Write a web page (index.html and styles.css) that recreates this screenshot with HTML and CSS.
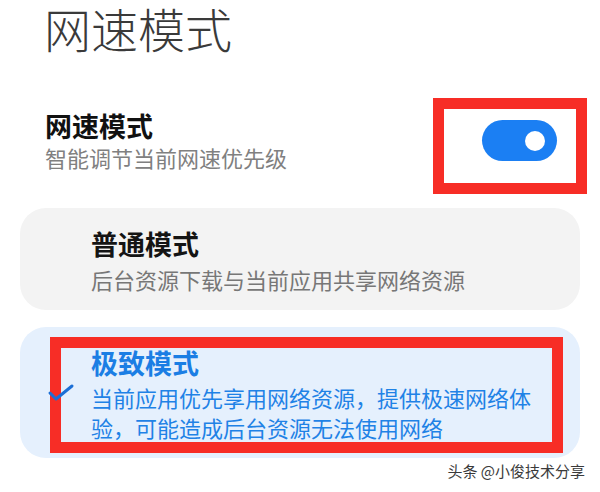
FILE: index.html
```html
<!DOCTYPE html>
<html lang="zh-CN">
<head>
<meta charset="utf-8">
<title>网速模式</title>
<link rel="stylesheet" href="styles.css">
</head>
<body>
<div class="page">
  <h1 class="page-title">网速模式</h1>

  <div class="setting-row">
    <div class="setting-text">
      <div class="setting-title">网速模式</div>
      <div class="setting-desc">智能调节当前网速优先级</div>
    </div>
    <div class="mark-box">
      <div class="toggle"><span class="knob"></span></div>
    </div>
  </div>

  <div class="mode-list">
    <div class="mode-card">
      <div class="mode-title">普通模式</div>
      <div class="mode-desc">后台资源下载与当前应用共享网络资源</div>
    </div>
    <div class="mode-card selected">
      <div class="mode-title">极致模式</div>
      <div class="mode-desc">当前应用优先享用网络资源，提供极速网络体验，可能造成后台资源无法使用网络</div>
      <div class="mark-overlay"></div>
      <svg class="check" viewBox="0 0 29 22" width="29" height="22">
        <path d="M4 10 L10 16 L26 3" fill="none" stroke="#1c6fd6" stroke-width="3" stroke-linecap="round" stroke-linejoin="round"/>
      </svg>
    </div>
  </div>

  <div class="watermark">头条 @小俊技术分享</div>
</div>
</body>
</html>
```

FILE: styles.css
```css
html, body {
  margin: 0;
  padding: 0;
  background: #ffffff;
}
body {
  font-family: "Noto Sans CJK SC", "Noto Sans", sans-serif;
  width: 600px;
  height: 492px;
  overflow: hidden;
}
.page {
  display: flex;
  flex-direction: column;
}
.page-title {
  margin: 0 0 0 44px;
  font-size: 47px;
  line-height: 56px;
  font-weight: 200;
  color: #3a3a3a;
}
.setting-row {
  display: flex;
  justify-content: space-between;
  align-items: flex-start;
  margin-top: 42px;
  padding-left: 45px;
  padding-right: 13px;
}
.setting-text {
  padding-top: 12px;
}
.setting-title {
  font-size: 27px;
  line-height: 32px;
  font-weight: 700;
  color: #111111;
}
.setting-desc {
  font-size: 22px;
  line-height: 30px;
  color: #808080;
}
.mark-box {
  box-sizing: border-box;
  width: 154px;
  height: 96px;
  border: 11px solid #f72d26;
  padding: 11px 0 0 38px;
}
.toggle {
  width: 75px;
  height: 41px;
  border-radius: 21px;
  background: #1b7ff3;
  display: flex;
  align-items: center;
  justify-content: flex-end;
  padding-right: 12px;
  box-sizing: border-box;
}
.knob {
  width: 20px;
  height: 20px;
  border-radius: 50%;
  background: #ffffff;
}
.mode-list {
  display: flex;
  flex-direction: column;
  gap: 17px;
  margin: 14px 20px 0 20px;
}
.mode-card {
  position: relative;
  background: #f3f3f3;
  border-radius: 26px;
  padding: 20px 40px 16px 71px;
}
.mode-title {
  font-size: 27px;
  line-height: 32px;
  font-weight: 700;
  color: #141414;
}
.mode-desc {
  margin-top: 4px;
  font-size: 22px;
  line-height: 30px;
  color: #777777;
}
.mode-card.selected {
  background: #e5f0fd;
  padding-top: 20px;
}
.mode-card.selected .mode-title {
  color: #1b7ee4;
}
.mode-card.selected .mode-desc {
  margin-top: 3px;
  color: #1f82e6;
}
.mark-overlay {
  position: absolute;
  left: 30px;
  top: 10px;
  width: 513px;
  height: 116px;
  box-sizing: border-box;
  border: 11px solid #f72d26;
}
.check {
  position: absolute;
  left: 26px;
  top: 56px;
}
.watermark {
  align-self: flex-end;
  margin-top: 3px;
  margin-right: 15px;
  font-size: 15px;
  line-height: 20px;
  color: #3a3a3a;
  text-shadow: 0 0 2px #ffffff;
}
```
